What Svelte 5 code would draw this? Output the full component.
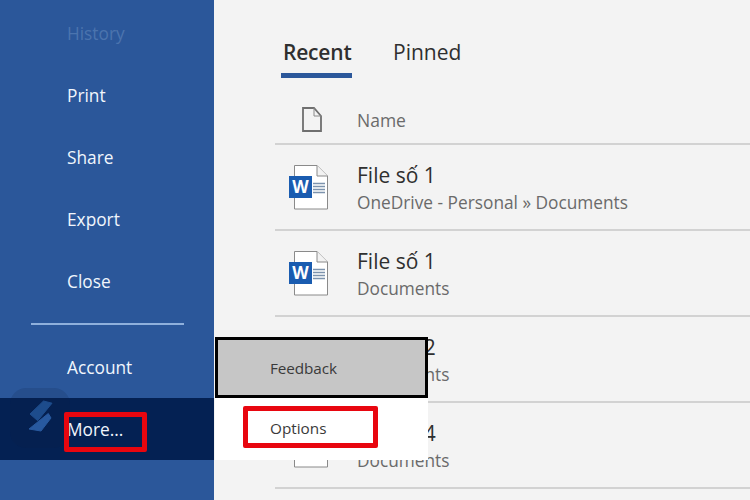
<script>
  const topItems = ["Print", "Share", "Export", "Close"];
  const files = [
    { name: "File số 1", path: "OneDrive - Personal » Documents" },
    { name: "File số 1", path: "Documents" },
    { name: "File số 2", path: "Documents" },
    { name: "File số 4", path: "Documents" }
  ];
</script>

<div class="backstage">
  <nav class="side">
    <div class="item history">History</div>
    {#each topItems as item}
      <div class="item">{item}</div>
    {/each}
    <div class="rule"></div>
    <div class="item account">Account</div>
    <div class="item more">
      <span class="halo"></span>
      <svg class="mark" width="27" height="33" viewBox="0 0 27 33">
        <path d="M15.5 1 L24 3.2 L9.7 20.7 L2 14 Z" fill="#1d4c8c" stroke="#1d4c8c" stroke-linejoin="round" />
        <path d="M20.3 13.5 L23 18 L13 31 L1 29 Z" fill="#28599f" stroke="#28599f" stroke-linejoin="round" />
      </svg>
      More...
      <span class="more-box"></span>
    </div>
  </nav>

  <main class="content">
    <div class="tabs">
      <div class="tab active">Recent</div>
      <div class="tab">Pinned</div>
    </div>
    <div class="head">
      <span class="icon-cell">
        <svg class="doc-outline" width="20" height="25" viewBox="0 0 20 25">
          <path d="M1 1 H12 L19 9 V24 H1 Z" fill="none" stroke="#6f6f6f" stroke-width="1.8" />
          <path d="M12 1 V9 H19" fill="none" stroke="#8a8a8a" stroke-width="1" />
        </svg>
      </span>
      <span class="name-label">Name</span>
    </div>
    {#each files as file}
      <div class="row">
        <span class="icon-cell">
          <svg class="word" width="40" height="48" viewBox="0 0 40 48">
            <path d="M6.5 2.5 H29 L39.5 13 V46 H6.5 Z" fill="#fff" stroke="#8a8a8a" stroke-width="1" />
            <path d="M29 2.5 V13 H39.5" fill="#f2f2f2" stroke="#8a8a8a" stroke-width="1" />
            <path d="M25 20.5 H37 M25 23.5 H37 M25 26.5 H37 M25 29.5 H37" stroke="#7d93ad" stroke-width="1.4" />
            <rect x="1" y="13" width="23" height="22" fill="#1a5cb0" />
            <text x="12.5" y="30" class="w-letter" text-anchor="middle">W</text>
          </svg>
        </span>
        <div class="meta">
          <div class="title">{file.name}</div>
          <div class="path">{file.path}</div>
        </div>
      </div>
    {/each}
  </main>

  <div class="popup">
    <div class="pop-item feedback">Feedback</div>
    <div class="pop-item options">
      Options
      <span class="options-box"></span>
    </div>
  </div>
</div>

<style>
  :global(body) {
    margin: 0;
  }

  .backstage {
    position: relative;
    display: flex;
    width: 750px;
    height: 500px;
    overflow: hidden;
    background: #f3f3f3;
    font-family: "Open Sans", "Noto Sans", sans-serif;
  }

  .side {
    flex: 0 0 214px;
    display: flex;
    flex-direction: column;
    padding-top: 2px;
    background: #2b579a;
    color: #f1f6fd;
  }

  .item {
    position: relative;
    display: flex;
    align-items: center;
    height: 62px;
    flex: none;
    padding-left: 67px;
    font-size: 17.3px;
  }

  .history {
    color: #4b74ae;
  }

  .rule {
    height: 2px;
    margin: 11px 30px 0 31px;
    background: #8fb0dc;
    flex: none;
  }

  .account {
    margin-top: 11px;
  }

  .more {
    background: #042153;
  }

  .more-box {
    position: absolute;
    left: 64px;
    top: 14px;
    width: 83px;
    height: 40px;
    box-sizing: border-box;
    border: 5px solid #e8060f;
    border-radius: 2px;
  }

  .halo {
    position: absolute;
    left: 10px;
    top: -10px;
    width: 60px;
    height: 60px;
    border-radius: 16px;
    background: rgba(10, 30, 70, 0.16);
  }

  .mark {
    position: absolute;
    left: 28px;
    top: 2px;
  }

  .content {
    flex: 1;
    min-width: 0;
    padding-left: 61px;
  }

  .tabs {
    display: flex;
    gap: 41px;
    padding: 34px 0 0 6px;
    height: 44px;
  }

  .tab {
    height: 44px;
    box-sizing: border-box;
    padding-top: 3px;
    color: #2f2f2f;
    font-size: 21px;
    line-height: 30px;
  }

  .tab.active {
    padding: 3px 0 0 2px;
    min-width: 71px;
    border-bottom: 5px solid #2b579a;
    font-weight: 600;
    letter-spacing: -0.2px;
  }

  .head {
    display: flex;
    align-items: center;
    height: 47px;
    padding-top: 18px;
    border-bottom: 2px solid #d2d2d2;
  }

  .icon-cell {
    display: flex;
    justify-content: center;
    align-items: center;
    flex: 0 0 70px;
    margin-right: 12px;
  }

  .doc-outline {
    margin-left: 3px;
  }

  .word {
    margin-left: -4px;
  }

  .name-label {
    color: #6a6a6a;
    font-size: 17.5px;
  }

  .row {
    display: flex;
    align-items: center;
    height: 84px;
    border-bottom: 2px solid #d2d2d2;
  }

  .title {
    color: #2f2f2f;
    font-size: 21px;
    line-height: 30px;
  }

  .path {
    color: #6a6a6a;
    font-size: 17.3px;
    line-height: 25px;
  }

  .w-letter {
    fill: #fff;
    font-size: 17px;
    font-weight: 700;
    font-family: "Open Sans", sans-serif;
  }

  .popup {
    position: absolute;
    left: 215px;
    top: 337px;
    width: 213px;
    background: #fff;
    color: #3a3a3a;
    font-size: 15.3px;
  }

  .pop-item {
    position: relative;
    display: flex;
    align-items: center;
    box-sizing: border-box;
    padding-left: 55px;
    padding-bottom: 2px;
    height: 62px;
  }

  .feedback {
    height: 61px;
    padding-left: 52px;
    padding-bottom: 0;
    background: #c6c6c6;
    border: 3px solid #000;
    letter-spacing: -0.1px;
  }

  .options-box {
    position: absolute;
    left: 28px;
    top: 8px;
    width: 135px;
    height: 42px;
    box-sizing: border-box;
    border: 5px solid #e8060f;
    border-radius: 2px;
  }
</style>
